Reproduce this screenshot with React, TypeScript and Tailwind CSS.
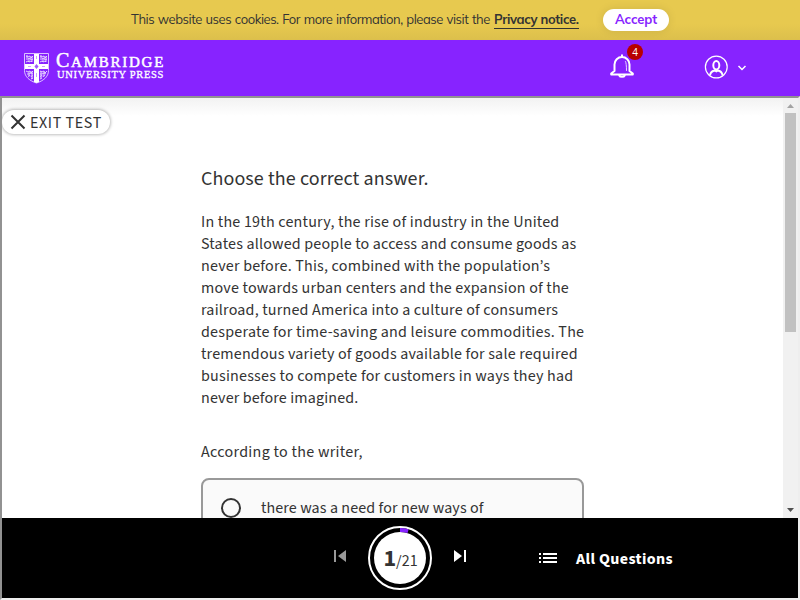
import React from "react";

const passage = [
  { text: "In the 19th century, the rise of industry in the United", spacing: "tracking-[0.220px]" },
  { text: "States allowed people to access and consume goods as", spacing: "tracking-[0.190px]" },
  { text: "never before. This, combined with the population’s", spacing: "tracking-[0.210px]" },
  { text: "move towards urban centers and the expansion of the", spacing: "tracking-[0.210px]" },
  { text: "railroad, turned America into a culture of consumers", spacing: "tracking-[0.200px]" },
  { text: "desperate for time-saving and leisure commodities. The", spacing: "tracking-[0.240px]" },
  { text: "tremendous variety of goods available for sale required", spacing: "tracking-[0.190px]" },
  { text: "businesses to compete for customers in ways they had", spacing: "tracking-[0.220px]" },
  { text: "never before imagined.", spacing: "tracking-[0.150px]" },
];

function CookieBar() {
  return (
    <div className="flex h-10 shrink-0 items-center bg-linear-to-b from-[#e7c94f] from-60% to-[#dcbf4c] pl-[131px] font-['Mulish','Muli','Open_Sans',sans-serif] text-[13px] text-[#333]">
      <p className="w-[363px] tracking-[-0.450px] [word-spacing:0.700px] whitespace-nowrap">
        This website uses cookies. For more information, please visit the
      </p>
      <a className="h-[17px] w-[85px] whitespace-nowrap border-b border-[#333] leading-[15px] font-bold tracking-[-0.350px]">
        Privacy notice.
      </a>
      <button className="ml-6 h-[22px] w-[66px] rounded-full bg-white text-center font-bold tracking-[-0.100px] text-[#8723ff] shadow-[0_0_10px_rgba(0,0,0,0.1)]">
        Accept
      </button>
    </div>
  );
}

function Shield() {
  return (
    <svg width="26" height="31" viewBox="0 0 26 31" fill="none">
      <path d="M.5.5h24v17c0 6.500-5.500 10.500-12 12.500C6 28 .5 24 .5 17.500Z" stroke="#dcc2ff" strokeWidth="1" />
      <path d="M10 1h5v10H24v5h-9v13L12.500 30l-2.500-1V16H1v-5h9Z" fill="#fff" />
      <path d="M12.500 11l2 2.500-2 2.500-2-2.500Z" fill="#a055ff" />
      <path d="M12.500 3v3M12.500 20v4M4 13.500h3M18 13.500h3" stroke="#c9a0ff" strokeWidth="1" />
      <g stroke="#e6d3ff" strokeWidth="1">
        <path d="M2 3l2 1 2-1 1 2 2-2M2 6h2l2-1 1 2 2-1M2 9l2-1 1 1 2-1 1 1M3 2v3M5 5v4M8 3v6" />
        <path d="M16 3l2 1 2-1 1 2 2-2M16 6h2l2-1 1 2 2-1M16 9l2-1 1 1 2-1 1 1M17 2v3M19 5v4M22 3v6" />
        <path d="M2 18l2 1 2-1 1 2 2-2M3 21h2l2-1 2 1M4 23.500l2-1 1 1 2-1M7 26l2-1M5 19v4M8 18v8" />
        <path d="M16 18l2 1 2-1 1 2 2-2M16 21h2l2-1 2 1M16 23.500l2-1 1 1 2-1M16 26l2-1M17 18v7M20 19v4" />
      </g>
    </svg>
  );
}

function Header() {
  return (
    <header className="flex h-14 shrink-0 bg-[#8723ff] text-white">
      <div className="mt-[13px] ml-[24px] flex w-[585px]">
        <Shield />
        <div className="ml-[6px] font-['Liberation_Serif',serif] whitespace-nowrap">
          <div className="h-[16px] text-[15px] leading-[15px] tracking-[1.750px] [-webkit-text-stroke:0.500px_white]">
            <span className="text-[20px]">C</span>AMBRIDGE
          </div>
          <div className="ml-px text-[10.500px] leading-[11px] tracking-[0.680px] [-webkit-text-stroke:0.300px_white]">UNIVERSITY PRESS</div>
        </div>
      </div>
      <div className="relative mt-[14px] h-[26px] w-[26px]">
        <svg width="26" height="26" viewBox="0 0 26 26" fill="none" stroke="#fff" strokeWidth="2" strokeLinecap="round" strokeLinejoin="round">
          <path d="M13 1.200v1.500M5.500 17V10.500a7.500 7.500 0 0 1 15 0V17l3.300 2.500v.9H2.200v-.9Z" />
          <path d="M10.300 21.500a2.800 1.800 0 0 0 5.400 0" />
          <path d="M16.500 7.500q1 1.500 1 9" strokeWidth="1" opacity=".8" />
        </svg>
        <span className="absolute -top-[10px] left-[18px] flex h-4 w-4 items-center justify-center rounded-full bg-[#b80000] font-['Open_Sans',sans-serif] text-[10px]">4</span>
      </div>
      <svg className="mt-[15px] ml-[69px]" width="25" height="25" viewBox="0 0 25 25" fill="none" stroke="#fff">
        <circle cx="12.300" cy="12" r="10.900" strokeWidth="1.200" />
        <ellipse cx="12.300" cy="10.300" rx="3" ry="4.200" strokeWidth="2" />
        <path d="M6 20q1-4 4.800-4.500l1.500.9 1.500-.9q3.800.5 4.800 4.500" strokeWidth="2" />
      </svg>
      <svg className="mt-[24px] ml-[8px]" width="10" height="8" viewBox="0 0 10 8" fill="none" stroke="#fff" strokeWidth="1.500">
        <path d="M1.500 2L5 5.500 8.500 2" />
      </svg>
    </header>
  );
}

function ScrollBar() {
  return (
    <div className="flex w-[15px] flex-col items-center bg-[#f1f1f1]">
      <svg width="15" height="15" viewBox="0 0 15 15"><path d="M4 10h7L7.500 6Z" fill="#a3a3a3" /></svg>
      <div className="h-[219px] w-[11px] bg-[#c1c1c1]" />
      <svg className="mt-auto" width="15" height="15" viewBox="0 0 15 15"><path d="M4 5h7L7.500 9Z" fill="#505050" /></svg>
    </div>
  );
}

function Question() {
  return (
    <main className="flex h-[420px]">
      <div className="flex-1 overflow-hidden bg-linear-to-b from-[#f2f2f2] to-white to-[18px]">
        <button className="mt-[12px] flex h-6 w-[108px] items-center rounded-full bg-white pl-[8px] text-[16px] tracking-[0.600px] shadow-[0_0_3px_1px_rgba(0,0,0,0.25)]">
          <svg width="16" height="16" viewBox="0 0 16 16" stroke="#333" strokeWidth="2"><path d="M1.500 1.500l13 13M14.500 1.500l-13 13" /></svg>
          <span className="ml-1 pt-[2px] whitespace-nowrap">EXIT TEST</span>
        </button>
        <div className="mt-[31px] ml-[199px] w-[383px]">
          <h1 className="h-[46px] text-[20px] leading-[28px] tracking-[0.100px]">Choose the correct answer.</h1>
          <div className="text-[16px] leading-[22px] whitespace-nowrap">
            {passage.map((line) => <p key={line.text} className={line.spacing}>{line.text}</p>)}
            <p className="mt-8 tracking-[0.300px]">According to the writer,</p>
            <div className="mt-[15px] flex h-[70px] items-start rounded-lg border-2 border-[#999] bg-[#fafafa] pt-[17px] pl-[18px]">
              <span className="mt-px h-5 w-5 rounded-full border-2 border-[#333]" />
              <span className="ml-5 tracking-[0.100px]">there was a need for new ways of</span>
            </div>
          </div>
        </div>
      </div>
      <ScrollBar />
    </main>
  );
}

function Footer() {
  return (
    <footer className="flex h-20 items-center bg-black text-white">
      <svg className="ml-[331px] -mt-1" width="14" height="12" viewBox="0 0 14 12" fill="#999"><path d="M1 0h2v12H1zM13 0v12L5 6z" /></svg>
      <div className="ml-[21px] h-16 w-16 rounded-full border-2 border-white">
        <div className="relative h-[60px] w-[60px]">
          <svg className="absolute inset-0" width="60" height="60" viewBox="0 0 60 60">
            <circle cx="30" cy="30" r="26" fill="#fff" />
            <path d="M30 2A28 28 0 0 1 38.100 3.200" fill="none" stroke="#8723ff" strokeWidth="4" />
          </svg>
          <div className="relative flex h-[60px] items-baseline justify-center pt-[14px] pl-px text-[#333]">
            <span className="text-[24px] leading-[34px] font-bold">1</span>
            <span className="text-[16px] leading-[34px]">/21</span>
          </div>
        </div>
      </div>
      <svg className="-mt-1 ml-[21px]" width="14" height="12" viewBox="0 0 14 12" fill="#fff"><path d="M11 0h2v12h-2zM1 0v12l8-6z" /></svg>
      <svg className="ml-[72px]" width="18" height="10" viewBox="0 0 18 10" fill="#fff"><path d="M0 0h2v2H0zM0 4h2v2H0zM0 8h2v2H0zM4 0h14v2H4zM4 4h14v2H4zM4 8h14v2H4z" /></svg>
      <span className="ml-[19px] pt-[2px] text-[16px] font-bold tracking-[0.370px] whitespace-nowrap">All Questions</span>
    </footer>
  );
}

export default function App() {
  return (
    <div className="flex h-[600px] w-[800px] flex-col overflow-hidden">
      <CookieBar />
      <Header />
      <div className="h-[504px] border-2 border-t-[#929292] border-r-[#eee] border-b-[#eee] border-l-[#929292] bg-white font-['Source_Sans_Pro','Source_Sans_3','Noto_Sans_CJK_SC',sans-serif] text-[#333]" lang="en">
        <Question />
        <Footer />
      </div>
    </div>
  );
}
